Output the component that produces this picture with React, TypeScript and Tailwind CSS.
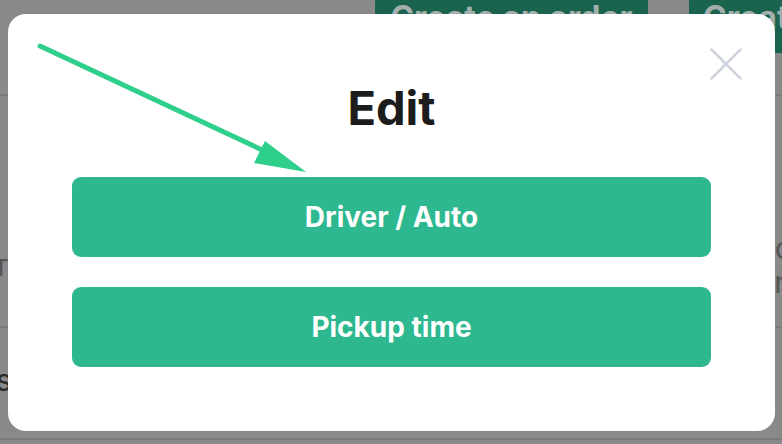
const Backdrop = () => (
    <div className="flex h-full w-full flex-col bg-[#898989] text-[#3a3a3a]">
        <div className="flex h-[53px] flex-row">
            <div className="w-[375px] shrink-0" />
            <div className="flex w-[273px] shrink-0 items-start justify-center bg-[#1a634f] pt-[3px] text-[32px] font-bold leading-[30px] text-[#a3afab]">
                Create an order
            </div>
            <div className="w-[41px] shrink-0" />
            <div className="flex flex-1 items-start overflow-hidden whitespace-nowrap bg-[#1a634f] pl-[14px] pt-[3px] text-[32px] font-bold leading-[30px] text-[#a3afab]">
                Create
            </div>
        </div>
        <div className="mt-[41px] h-[2px] bg-[#7c7c7c]" />
        <div className="flex h-[230px] flex-row items-start justify-between pt-[150px] text-[30px] leading-[34px]">
            <span className="-ml-[6px] mt-[2px] text-[#555]">т</span>
            <span className="-mr-[10px] -mt-[15px] text-right text-[#555]">c<br />n</span>
        </div>
        <div className="h-[2px] bg-[#7c7c7c]" />
        <div className="flex h-[110px] flex-row items-center">
            <span className="-ml-[4px] -mt-[6px] text-[30px] text-[#2a2a2a]">s</span>
        </div>
        <div className="h-[2px] bg-[#7c7c7c]" />
    </div>
);

const Arrow = () => (
    <svg className="absolute left-0 top-0" width="782" height="444" viewBox="0 0 782 444" fill="none">
        <line x1="40" y1="46" x2="275" y2="156" stroke="#2ecf8a" strokeWidth="5" strokeLinecap="round" />
        <polygon points="306,172 254,163 265,141" fill="#2ecf8a" />
    </svg>
);

export default function App() {
    return (
        <div className="relative h-[444px] w-[782px] overflow-hidden font-['Inter',sans-serif]">
            <Backdrop />
            <div className="absolute left-[8px] top-[14px] flex h-[417px] w-[767px] flex-col items-center rounded-[18px] bg-white px-[64px] pt-[66px]">
                <button className="absolute right-[33px] top-[34px]">
                    <svg width="32" height="32" viewBox="0 0 32 32" fill="none">
                        <path d="M1.5 1.5 L30.5 30.5 M30.5 1.5 L1.5 30.5" stroke="#cfd3df" strokeWidth="2.5" strokeLinecap="round" />
                    </svg>
                </button>
                <h2 className="text-[47px] font-bold leading-[56px] text-[#1c1c1c]">Edit</h2>
                <div className="mt-[41px] flex w-full flex-col gap-[30px]">
                    <button className="h-[80px] w-full rounded-[9px] bg-[#2db890] text-[28px] font-bold text-white">
                        Driver / Auto
                    </button>
                    <button className="h-[80px] w-full rounded-[9px] bg-[#2db890] text-[28px] font-bold text-white">
                        Pickup time
                    </button>
                </div>
            </div>
            <Arrow />
        </div>
    );
}
